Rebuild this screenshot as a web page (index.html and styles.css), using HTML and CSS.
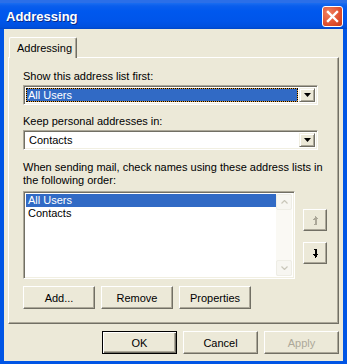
FILE: index.html
```html
<!DOCTYPE html>
<html>
<head>
<meta charset="utf-8">
<link rel="stylesheet" href="styles.css">
</head>
<body>
<div class="window">
  <div class="titlebar">
    <span class="title">Addressing</span>
    <span class="close"><svg width="13" height="13" viewBox="0 0 13 13"><path d="M2 2 L11 11 M11 2 L2 11" stroke="#fff" stroke-width="2.4" stroke-linecap="square"/></svg></span>
  </div>
  <div class="client">
    <div class="tabs"><div class="tab">Addressing</div></div>
    <div class="panel">
      <div class="label">Show this address list first:</div>
      <div class="combo">
        <div class="combo-text selected"><span>All Users</span></div>
        <div class="combo-btn"><svg width="7" height="4" viewBox="0 0 7 4"><path d="M0 0H7L3.5 4Z" fill="#000"/></svg></div>
      </div>
      <div class="label gap-a">Keep personal addresses in:</div>
      <div class="combo">
        <div class="combo-text"><span>Contacts</span></div>
        <div class="combo-btn"><svg width="7" height="4" viewBox="0 0 7 4"><path d="M0 0H7L3.5 4Z" fill="#000"/></svg></div>
      </div>
      <div class="label gap-b">When sending mail, check names using these address lists in the following order:</div>
      <div class="listrow">
        <div class="listbox">
          <div class="items">
            <div class="item sel">All Users</div>
            <div class="item">Contacts</div>
          </div>
          <div class="scroll">
            <div class="sbtn"><svg width="7" height="4" viewBox="0 0 7 4"><path d="M0.5 3.5L3.5 0.5L6.5 3.5" fill="none" stroke="#C9C7BA" stroke-width="1.2"/></svg></div>
            <div class="track"></div>
            <div class="sbtn"><svg width="7" height="4" viewBox="0 0 7 4"><path d="M0.5 0.5L3.5 3.5L6.5 0.5" fill="none" stroke="#C9C7BA" stroke-width="1.2"/></svg></div>
          </div>
        </div>
        <div class="moves">
          <div class="btn move"><svg width="7" height="9" viewBox="0 0 7 9" shape-rendering="crispEdges" fill="#ACA899"><rect x="3" y="1" width="2" height="8"/><rect x="2" y="2" width="1" height="2"/><rect x="1" y="3" width="1" height="1"/><rect x="5" y="2" width="1" height="1"/><rect x="3" y="0" width="1" height="1"/><rect x="2" y="8" width="3" height="1"/></svg></div>
          <div class="btn move"><svg width="7" height="9" viewBox="0 0 7 9" shape-rendering="crispEdges" fill="#000"><rect x="2" y="0" width="3" height="1"/><rect x="3" y="0" width="2" height="8"/><rect x="1" y="5" width="5" height="1"/><rect x="2" y="6" width="3" height="1"/><rect x="3" y="7" width="2" height="1"/><rect x="3" y="8" width="1" height="1"/></svg></div>
        </div>
      </div>
      <div class="actions">
        <div class="btn w72">Add...</div>
        <div class="btn w72">Remove</div>
        <div class="btn w72">Properties</div>
      </div>
    </div>
    <div class="footer">
      <div class="btn w75 default"><span>OK</span></div>
      <div class="btn w75">Cancel</div>
      <div class="btn w75 disabled">Apply</div>
    </div>
  </div>
</div>
</body>
</html>
```
FILE: styles.css
```css
html, body {
  margin: 0;
  padding: 0;
  width: 347px;
  height: 364px;
  overflow: hidden;
  background: #0A246A;
  font-family: "Liberation Sans", Arial, sans-serif;
  font-size: 11px;
  color: #000;
}
.window {
  width: 347px;
  height: 364px;
  display: flex;
  flex-direction: column;
  background: #0055E5;
  box-sizing: border-box;
  border-top: 3px solid #2B6FE8;
}
.titlebar {
  height: 26px;
  flex: none;
  display: flex;
  align-items: center;
  justify-content: space-between;
  padding: 0 4px 0 6px;
  background: linear-gradient(#1A6DF0 0px, #0A5EEC 3px, #0058EE 8px, #0055EA 18px, #0050DE 24px, #0046C8 26px);
}
.title {
  font-family: "Liberation Sans", Arial, sans-serif;
  font-weight: bold;
  font-size: 13px;
  color: #fff;
  text-shadow: 1px 1px 0 #0A2A8A;
  margin-top: 1px;
}
.close {
  width: 21px;
  height: 21px;
  box-sizing: border-box;
  border: 1px solid #fff;
  border-radius: 3px;
  background: radial-gradient(circle at 30% 30%, #F08060, #E0502F 60%, #C53A1A);
  display: flex;
  align-items: center;
  justify-content: center;
}
.client {
  flex: 1;
  margin: 0 4px 3px 4px;
  background: #ECE9D8;
  padding: 8px 4px 0 4px;
  display: flex;
  flex-direction: column;
}
.tabs {
  display: flex;
  height: 20px;
  position: relative;
  z-index: 1;
}
.tab {
  margin-left: 1px;
  width: 68px;
  height: 21px;
  box-sizing: border-box;
  border-top: 1px solid #fff;
  border-left: 1px solid #fff;
  border-right: 1px solid #716F64;
  box-shadow: inset -1px 0 0 #ACA899;
  border-radius: 2px 2px 0 0;
  background: #ECE9D8;
  padding: 4px 0 0 7px;
}
.panel {
  width: 331px;
  height: 267px;
  box-sizing: border-box;
  border-top: 1px solid #fff;
  border-left: 1px solid #fff;
  border-right: 1px solid #716F64;
  border-bottom: 1px solid #716F64;
  box-shadow: inset -1px -1px 0 #ACA899;
  padding: 12px 0 0 14px;
  display: flex;
  flex-direction: column;
}
.label {
  line-height: 13px;
  width: 300px;
}
.gap-a { margin-top: 10px; }
.gap-b { margin-top: 11px; }
.combo {
  margin-top: 2px;
  width: 295px;
  height: 20px;
  box-sizing: border-box;
  border-top: 1px solid #ACA899;
  border-left: 1px solid #ACA899;
  border-right: 1px solid #fff;
  border-bottom: 1px solid #fff;
  box-shadow: inset 1px 1px 0 #716F64, inset -1px -1px 0 #F1EFE2;
  background: #fff;
  padding: 2px;
  display: flex;
}
.combo-text {
  flex: 1;
  display: flex;
  align-items: center;
  padding-left: 2px;
  box-sizing: border-box;
  border: 1px solid transparent;
}
.combo-text.selected {
  background: linear-gradient(#316AC5, #316AC5) padding-box, #E0A040 border-box;
  border: 1px dotted #000;
  color: #fff;
  padding-left: 1px;
  margin-right: 1px;
}
.combo-btn {
  width: 16px;
  box-sizing: border-box;
  border-top: 1px solid #F1EFE2;
  border-left: 1px solid #F1EFE2;
  border-right: 1px solid #716F64;
  border-bottom: 1px solid #716F64;
  box-shadow: inset 1px 1px 0 #fff, inset -1px -1px 0 #ACA899;
  background: #ECE9D8;
  display: flex;
  align-items: center;
  justify-content: center;
}
.listrow {
  margin-top: 4px;
  display: flex;
  gap: 8px;
}
.listbox {
  width: 272px;
  height: 88px;
  box-sizing: border-box;
  border-top: 1px solid #ACA899;
  border-left: 1px solid #ACA899;
  border-right: 1px solid #fff;
  border-bottom: 1px solid #fff;
  box-shadow: inset 1px 1px 0 #716F64, inset -1px -1px 0 #F1EFE2;
  background: #fff;
  padding: 2px;
  display: flex;
}
.items {
  flex: 1;
}
.item {
  height: 13px;
  line-height: 13px;
  padding-left: 2px;
}
.item.sel {
  background: #316AC5;
  color: #fff;
}
.scroll {
  width: 16px;
  display: flex;
  flex-direction: column;
  background: #FAF9F4;
}
.sbtn {
  height: 16px;
  box-sizing: border-box;
  border: 1px solid #EEEDE5;
  border-radius: 2px;
  background: #F7F6F1;
  display: flex;
  align-items: center;
  justify-content: center;
}
.track { flex: 1; }
.moves {
  padding-top: 18px;
  display: flex;
  flex-direction: column;
  gap: 11px;
}
.btn {
  box-sizing: border-box;
  height: 23px;
  border-top: 1px solid #fff;
  border-left: 1px solid #fff;
  border-right: 1px solid #716F64;
  border-bottom: 1px solid #716F64;
  box-shadow: inset -1px -1px 0 #ACA899;
  background: #ECE9D8;
  display: flex;
  align-items: center;
  justify-content: center;
}
.move {
  width: 24px;
  height: 22px;
}
.actions {
  margin-top: 7px;
  display: flex;
  gap: 6px;
}
.w72 { width: 72px; }
.w75 { width: 75px; }
.footer {
  margin-top: 7px;
  display: flex;
  justify-content: flex-end;
  gap: 6px;
}
.btn.default {
  border: 1px solid #000;
  box-shadow: inset 1px 1px 0 #fff, inset -1px -1px 0 #716F64, inset -2px -2px 0 #ACA899;
}
.btn.disabled {
  color: #ACA899;
}
```
